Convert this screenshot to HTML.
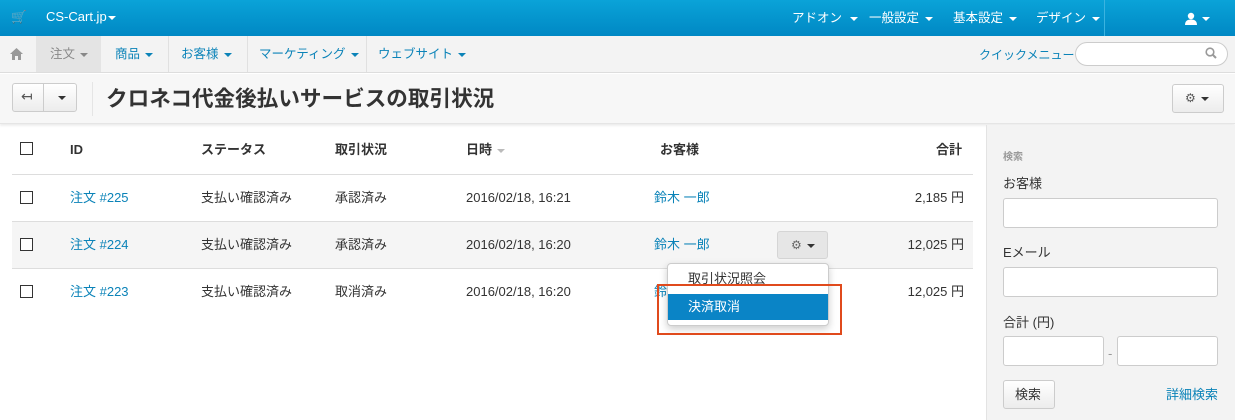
<!DOCTYPE html>
<html><head><meta charset="utf-8"><style>
*{box-sizing:border-box;margin:0;padding:0}
body{width:1235px;height:420px;overflow:hidden;font-family:"Liberation Sans","Noto Sans CJK JP",sans-serif;font-size:13px;color:#333;background:#fff;position:relative}
.a{position:absolute;white-space:nowrap;line-height:16px}
.top{left:0;top:0;width:1235px;height:36px;background:linear-gradient(#0aa3d8,#0088c4);color:#fff}
.nav{left:0;top:36px;width:1235px;height:37px;background:#f3f3f3;border-bottom:1px solid #ddd}
.tb{left:0;top:74px;width:1235px;height:50px;background:#f7f7f7;border-bottom:1px solid #e5e5e5;box-shadow:0 2px 2px #eee}
.blue{color:#0b83b8}
.car{display:inline-block;width:0;height:0;border-left:4px solid transparent;border-right:4px solid transparent;border-top:4px solid currentColor;vertical-align:middle;margin-left:5px}
.btn{border:1px solid #ccc;border-radius:3px;background:linear-gradient(#fff,#ececec)}
.cb{width:13px;height:13px;border:1px solid #333;background:#fff}
.in{background:#fff;border:1px solid #ccc;border-radius:3px;height:30px}
.line{height:1px;background:#ddd;left:12px;width:961px}
.top .a,.nav .a{font-size:12.5px}
</style></head><body>
<div class="a top">
 <span class="a" style="left:11px;top:9px;opacity:.8">🛒</span>
 <span class="a" style="left:46px;top:9px;font-size:13px!important">CS-Cart.jp<span class="car" style="margin-left:1px"></span></span>
 <span class="a" style="left:792px;top:10px">アドオン<span class="car" style="margin-left:8px"></span></span>
 <span class="a" style="left:869px;top:10px">一般設定<span class="car" style="margin-left:6px"></span></span>
 <span class="a" style="left:953px;top:10px">基本設定<span class="car" style="margin-left:6px"></span></span>
 <span class="a" style="left:1036px;top:10px">デザイン<span class="car" style="margin-left:6px"></span></span>
 <div class="a" style="left:1104px;top:0;width:1px;height:36px;background:#3bb3e0"></div>
 <span class="a" style="left:1185px;top:10px">
  <svg width="12" height="13" viewBox="0 0 12 13" style="vertical-align:middle"><circle cx="6" cy="4" r="3.2" fill="#fff"/><path d="M0 13 Q0 7.5 6 7.5 Q12 7.5 12 13Z" fill="#fff"/></svg><span class="car"></span></span>
</div>
<div class="a nav">
 <svg class="a" style="left:10px;top:12px" width="13" height="12" viewBox="0 0 13 12"><path d="M6.5 0 L13 6 H11 V12 H8 V8 H5 V12 H2 V6 H0Z" fill="#999"/></svg>
 <div class="a" style="left:36px;top:0;width:65px;height:36px;background:#e4e4e4"></div>
 <span class="a" style="left:50px;top:10px;color:#888">注文<span class="car"></span></span>
 <span class="a blue" style="left:115px;top:10px">商品<span class="car"></span></span>
 <div class="a" style="left:168px;top:0;width:1px;height:36px;background:#e0e0e0"></div>
 <span class="a blue" style="left:181px;top:10px">お客様<span class="car"></span></span>
 <div class="a" style="left:247px;top:0;width:1px;height:36px;background:#e0e0e0"></div>
 <span class="a blue" style="left:259px;top:10px">マーケティング<span class="car"></span></span>
 <div class="a" style="left:366px;top:0;width:1px;height:36px;background:#e0e0e0"></div>
 <span class="a blue" style="left:378px;top:10px">ウェブサイト<span class="car"></span></span>
 <span class="a blue" style="left:979px;top:11px;font-size:12px!important">クイックメニュー</span>
 <div class="a" style="left:1075px;top:6px;width:153px;height:24px;background:#fff;border:1px solid #ccc;border-radius:12px"></div>
 <svg class="a" style="left:1205px;top:11px" width="12" height="12" viewBox="0 0 12 12"><circle cx="5" cy="5" r="3.8" fill="none" stroke="#999" stroke-width="1.6"/><path d="M8 8 L11 11" stroke="#999" stroke-width="2"/></svg>
</div>
<div class="a tb">
 <div class="a btn" style="left:12px;top:9px;width:65px;height:29px"></div>
 <div class="a" style="left:43px;top:10px;width:1px;height:27px;background:#ccc"></div>
 <span class="a" style="left:21px;top:14px;color:#555;font-size:14px">↤</span>
 <span class="a" style="left:58px;top:15px;color:#333"><span class="car" style="margin:0"></span></span>
 <div class="a" style="left:92px;top:8px;width:1px;height:34px;background:#e5e5e5"></div>
 <span class="a" style="left:106px;top:13px;font-size:21.6px;line-height:24px;font-weight:bold;color:#333">クロネコ代金後払いサービスの取引状況</span>
 <div class="a btn" style="left:1172px;top:10px;width:52px;height:29px"></div>
 <span class="a" style="left:1185px;top:16px;color:#555;font-size:12px">⚙<span class="car" style="color:#333"></span></span>
</div>
<div class="a" style="left:986px;top:125px;width:249px;height:295px;background:#f3f3f3;border-left:1px solid #e3e3e3"></div>
<span class="a" style="left:1003px;top:150px;font-size:10px;color:#999;font-weight:bold">検索</span>
<span class="a" style="left:1003px;top:176px">お客様</span>
<div class="a in" style="left:1003px;top:198px;width:215px"></div>
<span class="a" style="left:1003px;top:245px">Eメール</span>
<div class="a in" style="left:1003px;top:267px;width:215px"></div>
<span class="a" style="left:1003px;top:315px">合計 (円)</span>
<div class="a in" style="left:1003px;top:336px;width:101px"></div>
<span class="a" style="left:1108px;top:346px;color:#999">-</span>
<div class="a in" style="left:1117px;top:336px;width:101px"></div>
<div class="a btn" style="left:1003px;top:380px;width:52px;height:29px"></div>
<span class="a" style="left:1015px;top:387px">検索</span>
<span class="a blue" style="left:1166px;top:387px">詳細検索</span>

<div class="a cb" style="left:20px;top:142px"></div>
<b class="a" style="left:70px;top:142px">ID</b>
<b class="a" style="left:201px;top:142px">ステータス</b>
<b class="a" style="left:335px;top:142px">取引状況</b>
<b class="a" style="left:466px;top:142px">日時<span class="car" style="color:#bbb"></span></b>
<b class="a" style="left:660px;top:142px">お客様</b>
<b class="a" style="left:936px;top:142px">合計</b>
<div class="a line" style="top:174px"></div>
<div class="a" style="left:12px;top:222px;width:961px;height:46px;background:#f5f5f5"></div>
<div class="a line" style="top:221px"></div>
<div class="a line" style="top:268px"></div>

<div class="a cb" style="left:20px;top:191px"></div>
<span class="a blue" style="left:70px;top:190px">注文 #225</span>
<span class="a" style="left:201px;top:190px">支払い確認済み</span>
<span class="a" style="left:335px;top:190px">承認済み</span>
<span class="a" style="left:466px;top:190px">2016/02/18, 16:21</span>
<span class="a blue" style="left:654px;top:190px">鈴木 一郎</span>
<span class="a" style="right:271px;top:190px">2,185 円</span>

<div class="a cb" style="left:20px;top:238px"></div>
<span class="a blue" style="left:70px;top:237px">注文 #224</span>
<span class="a" style="left:201px;top:237px">支払い確認済み</span>
<span class="a" style="left:335px;top:237px">承認済み</span>
<span class="a" style="left:466px;top:237px">2016/02/18, 16:20</span>
<span class="a blue" style="left:654px;top:237px">鈴木 一郎</span>
<div class="a" style="left:777px;top:231px;width:51px;height:28px;background:#e6e6e6;border:1px solid #d5d5d5;border-radius:3px"></div>
<span class="a" style="left:791px;top:237px;color:#666;font-size:12px">⚙<span class="car" style="color:#333"></span></span>
<span class="a" style="right:271px;top:237px">12,025 円</span>

<div class="a cb" style="left:20px;top:285px"></div>
<span class="a blue" style="left:70px;top:284px">注文 #223</span>
<span class="a" style="left:201px;top:284px">支払い確認済み</span>
<span class="a" style="left:335px;top:284px">取消済み</span>
<span class="a" style="left:466px;top:284px">2016/02/18, 16:20</span>
<span class="a blue" style="left:654px;top:284px">鈴木</span>
<span class="a" style="right:271px;top:284px">12,025 円</span>

<div class="a" style="left:667px;top:263px;width:162px;height:63px;background:#fff;border:1px solid #ccc;border-radius:4px;box-shadow:0 3px 8px rgba(0,0,0,.2)"></div>
<span class="a" style="left:688px;top:271px">取引状況照会</span>
<div class="a" style="left:668px;top:294px;width:160px;height:26px;background:#0a84c6"></div>
<span class="a" style="left:688px;top:299px;color:#fff">決済取消</span>
<div class="a" style="left:657px;top:284px;width:185px;height:51px;border:2px solid #e04a1c"></div>
</body></html>
